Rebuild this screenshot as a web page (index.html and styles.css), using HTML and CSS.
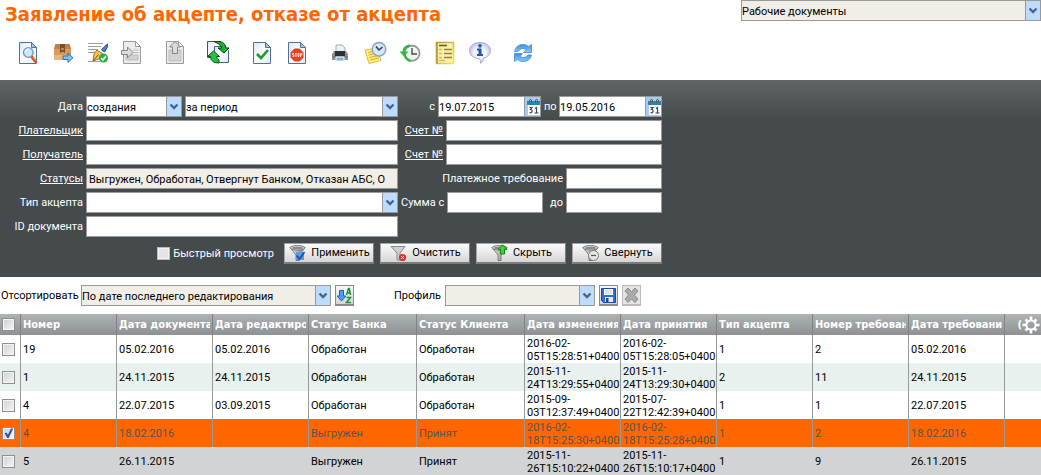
FILE: index.html
```html
<!DOCTYPE html>
<html lang="ru">
<head>
<meta charset="utf-8">
<title>Заявление об акцепте, отказе от акцепта</title>
<link rel="stylesheet" href="styles.css">
</head>
<body>
<svg class="defs" width="0" height="0" aria-hidden="true">
  <defs>
    <linearGradient id="paper" x1="0" y1="0" x2="1" y2="1"><stop offset="0" stop-color="#d5e6f8"/><stop offset=".5" stop-color="#fff"/><stop offset="1" stop-color="#dbe9f8"/></linearGradient>
    <linearGradient id="gold" x1="0" y1="0" x2="1" y2="1"><stop offset="0" stop-color="#b39a2c"/><stop offset="1" stop-color="#f5e458"/></linearGradient>
    <linearGradient id="sky" x1="0" y1="0" x2="0" y2="1"><stop offset="0" stop-color="#3d92e0"/><stop offset="1" stop-color="#8cc8fa"/></linearGradient>
    <linearGradient id="steel" x1="0" y1="0" x2="1" y2="0"><stop offset="0" stop-color="#f4f4f4"/><stop offset="1" stop-color="#777"/></linearGradient>
    <radialGradient id="bubble"><stop offset="0" stop-color="#fff"/><stop offset=".6" stop-color="#f0f0fd"/><stop offset="1" stop-color="#c3c2ea"/></radialGradient>
    <symbol id="chev" viewBox="0 0 14 19"><path d="M3.500 7.500 7 11l3.500-3.500" fill="none" stroke="#46648f" stroke-width="2.400"/></symbol>
    <symbol id="page" viewBox="0 0 25 24"><path d="M4.500 1.500h12l5 5v16h-17z" fill="url(#paper)" stroke="#50709f"/><path d="M16.500 1.500v5h5z" fill="#a9c4e4" stroke="#50709f"/></symbol>
    <symbol id="graypage" viewBox="0 0 25 24"><path d="M3.500.5h12l5 5v17h-17z" fill="#ececec" stroke="#9b9b9b"/><path d="M15.500.5v5h5z" fill="#fff" stroke="#9b9b9b"/></symbol>
    <symbol id="cal" viewBox="0 0 15 19"><path d="M0 0h15v19H0z" fill="#a7cbf3"/><path d="M2 4h13v4H2z" fill="#2c83ad"/><path d="M3 8h12v10H3z" fill="#fff"/><path d="M4.500 5.500V3q1.500-1.500 2 0v2.500m4 0V3q1.500-1.500 2 0v2.500" fill="none" stroke="#54585c"/><path d="M4.500 10.500h2.500l-1.500 2q2 0 1.500 2t-2.500 1M10 11.500l1.500-1v5.500m-2 0h4" fill="none" stroke="#39434d" stroke-width="1.200"/></symbol>
    <symbol id="funnel" viewBox="0 0 20 18"><path d="M2 3.500 8 11v5.500h3V11l6-7.500z" fill="url(#steel)" stroke="#666" stroke-width=".8"/><ellipse cx="9.500" cy="3.800" rx="7.500" ry="2.300" fill="#d5d5d5" stroke="#666" stroke-width=".8"/><ellipse cx="9.500" cy="4" rx="5.500" ry="1.200" fill="#8b8b8b"/></symbol>
  </defs>
</svg>

<header class="top">
  <h1>Заявление об акцепте, отказе от акцепта</h1>
  <span class="combo beige scope"><select aria-label="Раздел"><option>Рабочие документы</option></select><svg class="arrow" width="14" height="19"><use href="#chev"/></svg></span>
</header>

<nav class="toolbar">
  <div class="group">
    <button aria-label="Просмотр"><svg viewBox="0 0 25 24"><use href="#page"/><path d="m16.500 15.500 5 6" stroke="#d9531c" stroke-width="3"/><path d="m18 16 3.500 4" stroke="#f7b36f"/><circle cx="13.300" cy="11.500" r="4.800" fill="#c5e8fb" stroke="#6b93bd" stroke-width="1.300"/><path d="M10.500 11q.5-2.500 3-2.700" fill="none" stroke="#fff" stroke-width="1.500"/></svg></button>
    <button aria-label="Отправить"><svg viewBox="0 0 25 24"><path d="M5.500 3h14l1.500 5v11H4V8z" fill="#d99a5b"/><path d="M5.500 3h14L21 8H4z" fill="#bb8150"/><path d="M4 14h17v5H4z" fill="#e7b37c"/><path d="M10 3h5v9l-2.500-1.500L10 12z" fill="#7b4f2b"/><path d="M11 8h3" stroke="#e8c79b"/><path d="M13 15h5v-3l5 4.800-5 4.700v-3h-5z" fill="#7fc0f7" stroke="#2467ad" stroke-width=".9"/></svg></button>
    <button aria-label="Подписать"><svg viewBox="0 0 25 24"><path d="M3 2.500h15M3 5.500h13M3 8.500h10M3 11.500h7M3 20.500h12" stroke="#9d9d9d"/><path d="M22.500 3q1 3-3 8l-3-2q3-4 6-6z" fill="#4b7fd0" stroke="#2c539b"/><path d="m12 9 6 4-2 4-8 3 1-7z" fill="#f4c457" stroke="#a8741c"/><path d="m8.500 19.500 5-6" stroke="#7d5514"/><circle cx="18.500" cy="17" r="4.600" fill="#2eae45"/><path d="m16 17 2 2 3-4" fill="none" stroke="#fff" stroke-width="1.500"/></svg></button>
    <button aria-label="Импорт"><svg viewBox="0 0 25 24"><use href="#graypage"/><path d="M6 14h12v5H6zM13 9h6M13 11.500h6" fill="#d2d2d2" stroke="#bdbdbd"/><path d="M1.500 9.500h6V6l5.500 5.500L7.500 17v-3.500h-6z" fill="#dcdcdc" stroke="#858585"/></svg></button>
  </div>
  <div class="group"><button aria-label="Экспорт"><svg viewBox="0 0 25 24"><use href="#graypage"/><path d="M6 9h12v11H6z" fill="#d2d2d2" stroke="#bdbdbd"/><path d="M9.500 12.500V6h-3L12 .5 17.500 6h-3v6.500z" fill="#dcdcdc" stroke="#858585"/></svg></button></div>
  <div class="group"><button aria-label="Обмен"><svg viewBox="0 0 25 24"><path d="M1.500.5h13v16h-13z" fill="url(#paper)" stroke="#44506a"/><path d="M8.500 5.500h10l4 4v12h-14z" fill="url(#paper)" stroke="#44608c"/><path d="M8 .5q11-1.500 12 6.500h3l-5 5-6-5h4q-1-4-8-6.500z" fill="#18b534" stroke="#063f0e"/><path d="m7.500 10 6 5.500H10.500q0 2.500 2.500 3.500v3Q4.500 22 4.500 15.500h-3z" fill="#25c440" stroke="#075c12"/></svg></button></div>
  <div class="group">
    <button aria-label="Проверить"><svg viewBox="0 0 25 24"><use href="#page"/><path d="m8 13 4 4 7-8" fill="none" stroke="#1d9a27" stroke-width="2.600"/></svg></button>
    <button aria-label="Остановить"><svg viewBox="0 0 25 24"><use href="#page"/><path d="M10.500 8h5l3.500 3.500v5L15.500 20h-5L7 16.500v-5z" fill="#f2401c" stroke="#d93a1c"/><path d="M10 12.500H8.500v1.500H10v1.500H8.500M11 12.500h2M12 12.500v3.500M14 12.500h1v3h-1zM16.500 16v-3.500H18V14h-1" fill="none" stroke="#fff" stroke-width=".8"/></svg></button>
  </div>
  <div class="group">
    <button aria-label="Печать"><svg viewBox="0 0 25 24"><path d="M9 4h6l3 3v4H9z" fill="#e8f2f4" stroke="#9fb0b5"/><path d="M7 10h12l2 3v6H5v-6z" fill="#8b9297"/><path d="M8 10h10v5H8z" fill="#2c3035"/><path d="M5 15h16v2H5z" fill="#787e82"/><path d="M9 16h8v4H9z" fill="#7fb6ea" stroke="#f3f6f8"/></svg></button>
    <button aria-label="Отложенные"><svg viewBox="0 0 25 24"><path d="m3 9 12-2 4 12.500L7 22.500z" fill="#fdf07e" stroke="#e3b93c"/><path d="m6 11.500 8-1.500M6.500 14l9-2M7.500 16.500l9-2M8 19l9-2" stroke="#d6a63a"/><circle cx="17" cy="8.300" r="6.800" fill="#d4e6f8" stroke="#8aa0bd" stroke-width="1.400"/><path d="m14 5.500 3 3.500 3.500-3" fill="none" stroke="#2c3a52" stroke-width="1.500"/></svg></button>
    <button aria-label="История"><svg viewBox="0 0 25 24"><circle cx="15" cy="12.300" r="7.600" fill="#f0f3f1" stroke="#8d9690" stroke-width="1.700"/><path d="M15 7v6h5" fill="none" stroke="#454c48" stroke-width="1.400"/><path d="M13 4.500q-6.500 1-6.500 7M7 12q1 6 6.500 8" fill="none" stroke="#35b545" stroke-width="2.400"/><path d="M2.500 10.500h9L7 15.500z" fill="#2dbd3e"/></svg></button>
    <button aria-label="Журнал"><svg viewBox="0 0 25 24"><path d="M4.500 1.500h17v21h-17z" fill="#faf2a9" stroke="url(#gold)" stroke-width="1.600"/><path d="M5 1.500v21" stroke="#b59b34" stroke-width="1.600"/><path d="M7 4.500h8" stroke="#6c5b20" stroke-width="1.600"/><path d="M12 8.500h8M12 12.500h8M12 16.500h8" stroke="#958236" stroke-width="1.600"/><path d="M7 8.500h3M7 12.500h3M7 16.500h3M7 19.500h6" stroke="#cdbb63" stroke-width="1.400"/></svg></button>
    <button aria-label="Информация"><svg viewBox="0 0 25 24"><path d="M13 1.500c6 0 10.500 3.500 10.500 8 0 4-3 6.800-7 7.700q.5 3-3 5 .8-2.500-1-4.500C6.500 17.500 2.500 14 2.500 9.500c0-4.500 4.500-8 10.500-8z" fill="url(#bubble)" stroke="#adabd6"/><circle cx="13" cy="4.800" r="1.900" fill="#1d62c6"/><path d="M10 7.500h4.500V13H16v2h-6v-2h1.500V9.500H10z" fill="#1a58b8"/></svg></button>
  </div>
  <div class="group"><button aria-label="Обновить"><svg viewBox="0 0 25 24"><path d="M4.500 10.500Q6 3.500 13 3.500q3.500 0 5.500 2l3-2v8h-8l2.500-3q-4.500-3-8 2z" fill="url(#sky)" stroke="#3f8ad6" stroke-width=".8"/><path d="M21.500 14Q20 20.500 13 20.500q-3.500 0-5.500-2l-3 2v-8h8l-2.500 3q4.500 3 8-1.500z" fill="url(#sky)" stroke="#3f8ad6" stroke-width=".8"/></svg></button></div>
</nav>

<form class="filter">
  <div class="grid">
    <label for="dt">Дата</label>
    <div class="line">
      <span class="combo w96"><select id="dt"><option>создания</option></select><svg class="arrow" width="14" height="19"><use href="#chev"/></svg></span>
      <span class="combo grow"><select aria-label="Период"><option>за период</option></select><svg class="arrow" width="14" height="19"><use href="#chev"/></svg></span>
    </div>
    <div class="line end">
      <label for="d1">с</label><span class="date"><input id="d1" value="19.07.2015"><button type="button" aria-label="Календарь"><svg width="15" height="19"><use href="#cal"/></svg></button></span>
      <label class="to" for="d2">по</label><span class="date"><input id="d2" value="19.05.2016"><button type="button" aria-label="Календарь"><svg width="15" height="19"><use href="#cal"/></svg></button></span>
    </div>

    <a href="#payer">Плательщик</a>
    <input class="field" id="payer" aria-label="Плательщик">
    <div class="line end"><a href="#acc1">Счет №</a><input class="field w216" id="acc1" aria-label="Счет №"></div>

    <a href="#payee">Получатель</a>
    <input class="field" id="payee" aria-label="Получатель">
    <div class="line end"><a href="#acc2">Счет №</a><input class="field w216" id="acc2" aria-label="Счет №"></div>

    <a href="#states">Статусы</a>
    <input class="field beige" id="states" aria-label="Статусы" readonly value="Выгружен, Обработан, Отвергнут Банком, Отказан АБС, О">
    <div class="line end"><label for="req">Платежное требование</label><input class="field w96" id="req"></div>

    <label for="kind">Тип акцепта</label>
    <span class="combo"><select id="kind"><option></option></select><svg class="arrow" width="14" height="19"><use href="#chev"/></svg></span>
    <div class="line end"><label for="s1">Сумма с</label><input class="field w96" id="s1"><label class="to" for="s2">до</label><input class="field w96" id="s2"></div>

    <label for="docid">ID документа</label>
    <input class="field" id="docid">
  </div>
  <div class="actions">
    <input type="checkbox" class="tick" id="quick"><label for="quick">Быстрый просмотр</label>
    <button type="button"><svg width="20" height="18"><use href="#funnel"/><path d="M8 8h8v8H8z" fill="#5b9be2"/><path d="m8.500 11.500 3 3.500 5-7" fill="none" stroke="#1c4fa0" stroke-width="1.800"/></svg>Применить</button>
    <button type="button"><svg width="20" height="18"><path d="M2 2.500h14l-5 6.500v7H8V9z" fill="#cfcfd2" stroke="#8a8a8e"/><circle cx="13.500" cy="13.500" r="3.600" fill="#d03038"/><path d="m12 12 3 3m0-3-3 3" stroke="#fff"/></svg>Очистить</button>
    <button type="button"><svg width="20" height="18"><use href="#funnel"/><path d="m12.500.8 4.500 4.500h-2.500V10h-4V5.300H8z" fill="#41d532" stroke="#14821a"/></svg>Скрыть</button>
    <button type="button"><svg width="20" height="18"><use href="#funnel"/><circle cx="12.500" cy="11.500" r="5" fill="#e3e6e4" stroke="#777c79"/><path d="M10 11.500h5" stroke="#555" stroke-width="1.200"/></svg>Свернуть</button>
  </div>
</form>

<div class="sortbar">
  <div class="line">
    <label class="l-sort" for="sort">Отсортировать</label>
    <span class="combo beige w250"><select id="sort"><option>По дате последнего редактирования</option></select><svg class="arrow" width="14" height="19"><use href="#chev"/></svg></span>
    <button class="mini" aria-label="Порядок сортировки"><svg width="17" height="19"><path d="M3.500 4.500h4V10H10l-4.500 5L1 10h2.500z" fill="#4e9df0" stroke="#1f62b5"/><path d="m10.500 9 2-6.500h.8l1.200 6.500M11 7h3M10.500 11.500h4l-4 5h4.500" fill="none" stroke="#1e9134" stroke-width="1.500"/></svg></button>
  </div>
  <div class="line">
    <label class="l-profile" for="profile">Профиль</label>
    <span class="combo beige w150"><select id="profile"><option></option></select><svg class="arrow" width="14" height="19"><use href="#chev"/></svg></span>
    <button class="mini" aria-label="Сохранить профиль"><svg width="17" height="19"><path d="M1.500 2.500h14v14h-12l-2-2z" fill="#2e6fd8" stroke="#1b4ba0"/><path d="M4 3h9v6H4z" fill="#fff"/><path d="M5 5h7M5 7h7" stroke="#b4c8e6"/><path d="M5 11h8v5H5z" fill="#e6eaf0"/><path d="M6 12h2.500v4H6z" fill="#1b4ba0"/></svg></button>
    <button class="mini off" aria-label="Удалить профиль" disabled><svg width="17" height="19"><path d="m2 5 3-3 3.500 3.500L12 2l3 3-3.500 4 3.500 4-3 3.500-3.500-3.500L5 16.500 2 13l3.500-4z" fill="#aaa" stroke="#8c8c8c"/></svg></button>
  </div>
</div>

<table class="docs">
  <colgroup><col class="c-check"><col class="c-m"><col class="c-m"><col class="c-m"><col class="c-l"><col class="c-l"><col class="c-m"><col class="c-m"><col class="c-m"><col class="c-m"><col class="c-m"><col></colgroup>
  <thead>
    <tr><th><input type="checkbox" class="tick" aria-label="Выбрать все"></th><th><div>Номер</div></th><th><div>Дата документа</div></th><th><div>Дата редактирования</div></th><th><div>Статус Банка</div></th><th><div>Статус Клиента</div></th><th><div>Дата изменения</div></th><th><div>Дата принятия</div></th><th><div>Тип акцепта</div></th><th><div>Номер требования</div></th><th><div>Дата требования</div></th><th class="last"><div class="tools"><span>(</span><button class="gear" aria-label="Настройка"><svg width="18" height="18" viewBox="-9 -9 18 18"><g stroke="#fff" stroke-width="2.600"><path d="M0-8.500V-5M0 8.500V5M-8.500 0H-5M8.500 0H5M-5.500-5.500l2 2M5.500-5.500l-2 2M-5.500 5.500l2-2M5.500 5.500l-2-2"/><circle r="4.600" fill="none" stroke-width="2"/></g></svg></button></div></th></tr>
  </thead>
  <tbody>
    <tr><td><input type="checkbox" class="tick" aria-label="Документ 19"></td><td>19</td><td>05.02.2016</td><td>05.02.2016</td><td>Обработан</td><td>Обработан</td><td class="ts">2016-02-05T15:28:51+0400</td><td class="ts">2016-02-05T15:28:05+0400</td><td>1</td><td>2</td><td>05.02.2016</td><td></td></tr>
    <tr class="alt"><td><input type="checkbox" class="tick" aria-label="Документ 1"></td><td>1</td><td>24.11.2015</td><td>24.11.2015</td><td>Обработан</td><td>Обработан</td><td class="ts">2015-11-24T13:29:55+0400</td><td class="ts">2015-11-24T13:29:30+0400</td><td>2</td><td>11</td><td>24.11.2015</td><td></td></tr>
    <tr><td><input type="checkbox" class="tick" aria-label="Документ 4"></td><td>4</td><td>22.07.2015</td><td>03.09.2015</td><td>Обработан</td><td>Обработан</td><td class="ts">2015-09-03T12:37:49+0400</td><td class="ts">2015-07-22T12:42:39+0400</td><td>1</td><td>1</td><td>22.07.2015</td><td></td></tr>
    <tr class="sel"><td><input type="checkbox" class="tick" aria-label="Документ 4 от 18.02.2016" checked></td><td>4</td><td>18.02.2016</td><td></td><td>Выгружен</td><td>Принят</td><td class="ts">2016-02-18T15:25:30+0400</td><td class="ts">2016-02-18T15:25:28+0400</td><td>1</td><td>2</td><td>18.02.2016</td><td></td></tr>
    <tr class="hover"><td><input type="checkbox" class="tick" aria-label="Документ 5"></td><td>5</td><td>26.11.2015</td><td></td><td>Выгружен</td><td>Принят</td><td class="ts">2015-11-26T15:10:22+0400</td><td class="ts">2015-11-26T15:10:17+0400</td><td>1</td><td>9</td><td>26.11.2015</td><td></td></tr>
  </tbody>
</table>
</body>
</html>
```
FILE: styles.css
```css
* { box-sizing: border-box; }
body, input, select, button, table {
  font-family: Roboto, "Noto Sans", sans-serif;
  font-size: 11px;
  line-height: 14px;
  color: #000;
}
body { margin: 0; background: #fff; }
input, button, select { margin: 0; padding: 0; border: 0; border-radius: 0; }
svg { display: block; flex: none; }
.defs { position: absolute; }

.top { display: flex; justify-content: space-between; align-items: flex-start; height: 36px; }
h1 { margin: 0; padding-left: 5px; font-family: "DejaVu Sans Condensed", "DejaVu Sans", sans-serif; font-size: 20px; line-height: 28px; color: #f60; white-space: nowrap; }
.scope { width: 300px; }

.combo { display: grid; height: 21px; border: 1px solid #999; background: #fff; }
.combo select {
  grid-area: 1 / 1;
  width: 100%;
  min-width: 0;
  height: 19px;
  padding: 2px 16px 0 0;
  appearance: none;
  background: transparent;
}
.combo .arrow { grid-area: 1 / 1; justify-self: end; box-sizing: content-box; border-left: 1px solid #999; background: #bddcfb; pointer-events: none; }
.beige, .field.beige { background: #f1ede7; }

.toolbar { display: flex; gap: 8px; height: 44px; padding-left: 10px; }
.group { display: flex; }
.group button { display: flex; justify-content: center; align-items: center; width: 35px; height: 34px; background: none; }
.group svg { width: 25px; height: 24px; }

.filter { padding: 16px 0 13px; background: linear-gradient(#5f6467, #454a4d 40px); color: #fff; }
.grid { display: grid; grid-template-columns: 83px minmax(0, 312px) 261px; grid-auto-rows: 21px; gap: 3px; width: 100%; max-width: 662px; }
.grid > label, .grid > a { text-align: right; line-height: 22px; white-space: nowrap; }
.line { display: flex; gap: 3px; height: 21px; line-height: 22px; white-space: nowrap; }
.end { justify-content: flex-end; }
.filter a { color: #fff; text-decoration: underline; }
.grow { flex: 1; }
.w96 { flex: none; width: 96px; }
.w216 { flex: none; width: 216px; }
.w250 { width: 250px; }
.w150 { width: 150px; }
.to { width: 18px; text-align: right; }
.date + .to { width: 12px; }
.field { height: 21px; padding: 1px 2px 0; border: 1px solid #999; background: #fff; }
.date { display: flex; flex: none; width: 103px; height: 21px; border: 1px solid #999; background: #fff; }
.date input { flex: 1; min-width: 0; padding-top: 2px; background: none; }
.date button { width: 16px; border-left: 1px solid #999; background: #a7cbf3; }

.actions { display: flex; justify-content: flex-end; align-items: center; gap: 6px; width: 100%; max-width: 662px; margin-top: 6px; }
.actions label { margin: 0 4px 0 -3px; }
.actions button {
  display: flex;
  justify-content: center;
  align-items: center;
  gap: 3px;
  width: 90px;
  height: 21px;
  border: 1px solid;
  border-color: #a5a5a5 #7b7b7b #7b7b7b #a5a5a5;
  border-bottom-width: 2px;
  background: linear-gradient(#fbfbfb, #d6d6d6);
}

.sortbar { display: flex; gap: 40px; padding: 8px 0 8px 1px; }
.sortbar .line { gap: 4px; }
.l-sort { width: 76px; }
.l-profile { width: 47px; }
.mini { width: 19px; height: 21px; border: 1px solid #8b8b8b; border-bottom-width: 2px; background: linear-gradient(#f7f7f7, #d5d5d5); }
.off { border-color: #bbb; background: #e4e4e4; }

.tick {
  appearance: none;
  display: block;
  flex: none;
  width: 13px;
  height: 13px;
  border: 1px solid #8e8f8f;
  background: linear-gradient(135deg, #ccd0d5, #f6f6f6);
  box-shadow: inset 0 0 0 1px #f4f4f4;
}
.actions .tick { background: #e4e4e4; border-color: #bbb; }
.tick:checked::before {
  content: "";
  display: block;
  width: 11px;
  height: 11px;
  background: #3a4f97;
  clip-path: polygon(15% 48%, 32% 42%, 45% 62%, 72% 5%, 92% 5%, 52% 92%, 38% 92%);
}

.docs { width: 100%; table-layout: fixed; border-collapse: separate; border-spacing: 0; }
.c-check { width: 21px; }
.c-m { width: 96px; }
.c-l { width: 108px; }
.docs th, .docs td { overflow: hidden; padding: 0 2px; border-right: 1px solid #999; text-align: left; white-space: nowrap; }
.docs th { height: 21px; background: linear-gradient(#aeb3b6, #8d9194); border-color: #7f8386; color: #fff; font-family: "DejaVu Sans Condensed", "DejaVu Sans", sans-serif; font-weight: bold; }
.docs th div { overflow: hidden; }
.docs td { height: 28px; padding-top: 1px; }
.docs td.ts { padding: 1px 0 0 2px; line-height: 13px; white-space: normal; }
.docs th:last-child, .docs td:last-child { border-right: 0; }
.alt td { background: #e8f1ee; }
.sel td { background: #f60; color: #555; }
.hover td { background: #d2d3d5; border-color: #d2d3d5; }
.docs th.last { padding: 0 1px 0 0; }
.tools { display: flex; justify-content: flex-end; align-items: center; }
.gear { background: none; }
```
